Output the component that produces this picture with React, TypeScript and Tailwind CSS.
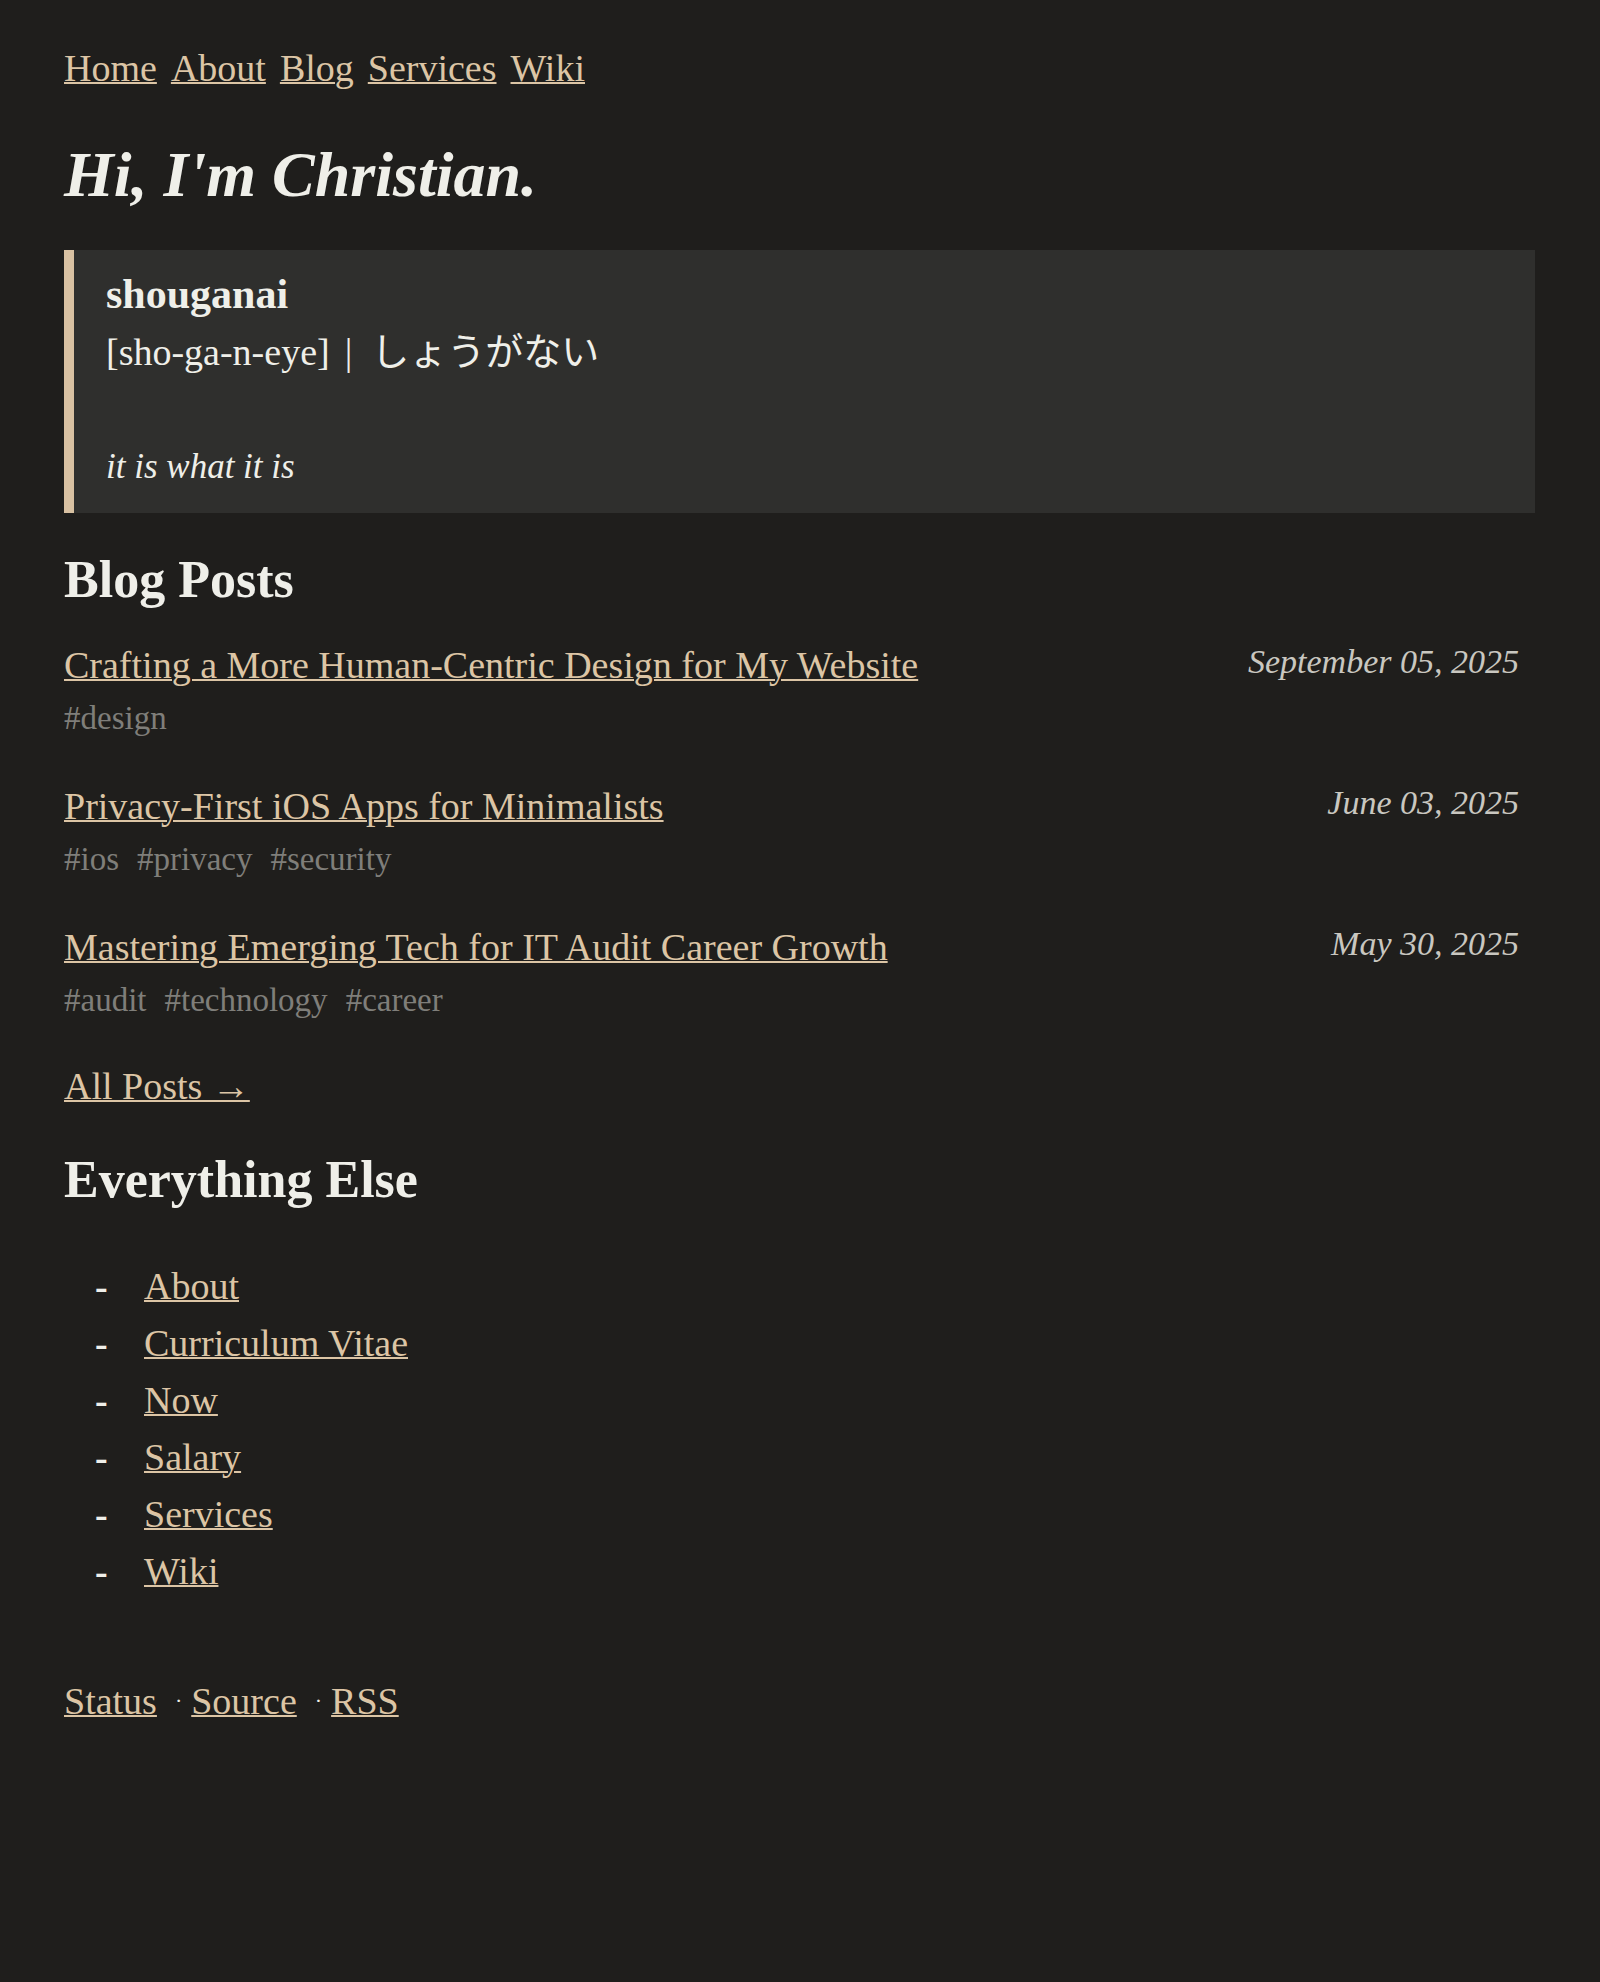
import React from "react";

const navLinks = ["Home", "About", "Blog", "Services", "Wiki"];

const posts = [
  {
    title: "Crafting a More Human-Centric Design for My Website",
    date: "September 05, 2025",
    tags: ["design"],
  },
  {
    title: "Privacy-First iOS Apps for Minimalists",
    date: "June 03, 2025",
    tags: ["ios", "privacy", "security"],
  },
  {
    title: "Mastering Emerging Tech for IT Audit Career Growth",
    date: "May 30, 2025",
    tags: ["audit", "technology", "career"],
  },
];

const otherLinks = ["About", "Curriculum Vitae", "Now", "Salary", "Services", "Wiki"];

const linkClass = "text-[#dcc5a5] underline decoration-2";

export default function App() {
  return (
    <div className="min-h-screen bg-[#1f1e1c] text-[#efefe9] font-['Liberation_Serif','Noto_Sans_CJK_JP',serif] text-[38px] leading-[57px] pt-10 pl-16 pr-[65px]">
      {/* top navigation */}
      <nav className="flex gap-[14px]">
        {navLinks.map((l) => (
          <a key={l} href="#" className={linkClass}>
            {l}
          </a>
        ))}
      </nav>

      <h1 className="mt-[41px] text-[64px] leading-[74px] font-bold italic">Hi, I'm Christian.</h1>

      <blockquote className="mt-[38px] border-l-[10px] border-[#d8c1a2] bg-[#2f2f2d] pl-8 pt-4 pb-[18px]">
        <p>
          <strong className="text-[42px] font-bold">shouganai</strong>
          <br />
          [sho-ga-n-eye]
          <span className="ml-[15px] mr-[19px]">|</span>
          しょうがない
        </p>
        <p className="mt-[57px] italic text-[35px]">it is what it is</p>
      </blockquote>

      {/* blog posts */}
      <h2 className="mt-[36px] text-[52px] leading-[62px] font-bold">Blog Posts</h2>
      <ul className="mt-[26px] pr-4 flex flex-col gap-[36px]">
        {posts.map((p) => (
          <li key={p.title}>
            <div className="flex justify-between items-start">
              <a href="#" className={linkClass}>
                {p.title}
              </a>
              <span className="italic text-[34px] leading-[50px] text-[#c9c7c0]">{p.date}</span>
            </div>
            <div className="flex gap-[18px] text-[33px] leading-[48px] text-[#7f7e7a]">
              {p.tags.map((t) => (
                <span key={t}>#{t}</span>
              ))}
            </div>
          </li>
        ))}
      </ul>

      <a href="#" className={`${linkClass} block w-fit mt-[34px]`}>
        All Posts →
      </a>

      <h2 className="mt-[34px] text-[52px] leading-[62px] font-bold">Everything Else</h2>
      <ul className="mt-[47px] pl-[31px]">
        {otherLinks.map((l) => (
          <li key={l} className="flex">
            <span className="w-[49px] font-bold">-</span>
            <a href="#" className={linkClass}>
              {l}
            </a>
          </li>
        ))}
      </ul>

      {/* footer */}
      <footer className="mt-[72px]">
        <a href="#" className={linkClass}>
          Status
        </a>
        <span className="ml-[18px] mr-[9px] text-[22px] align-[6px]">·</span>
        <a href="#" className={linkClass}>
          Source
        </a>
        <span className="ml-[18px] mr-[9px] text-[22px] align-[6px]">·</span>
        <a href="#" className={linkClass}>
          RSS
        </a>
      </footer>
    </div>
  );
}
